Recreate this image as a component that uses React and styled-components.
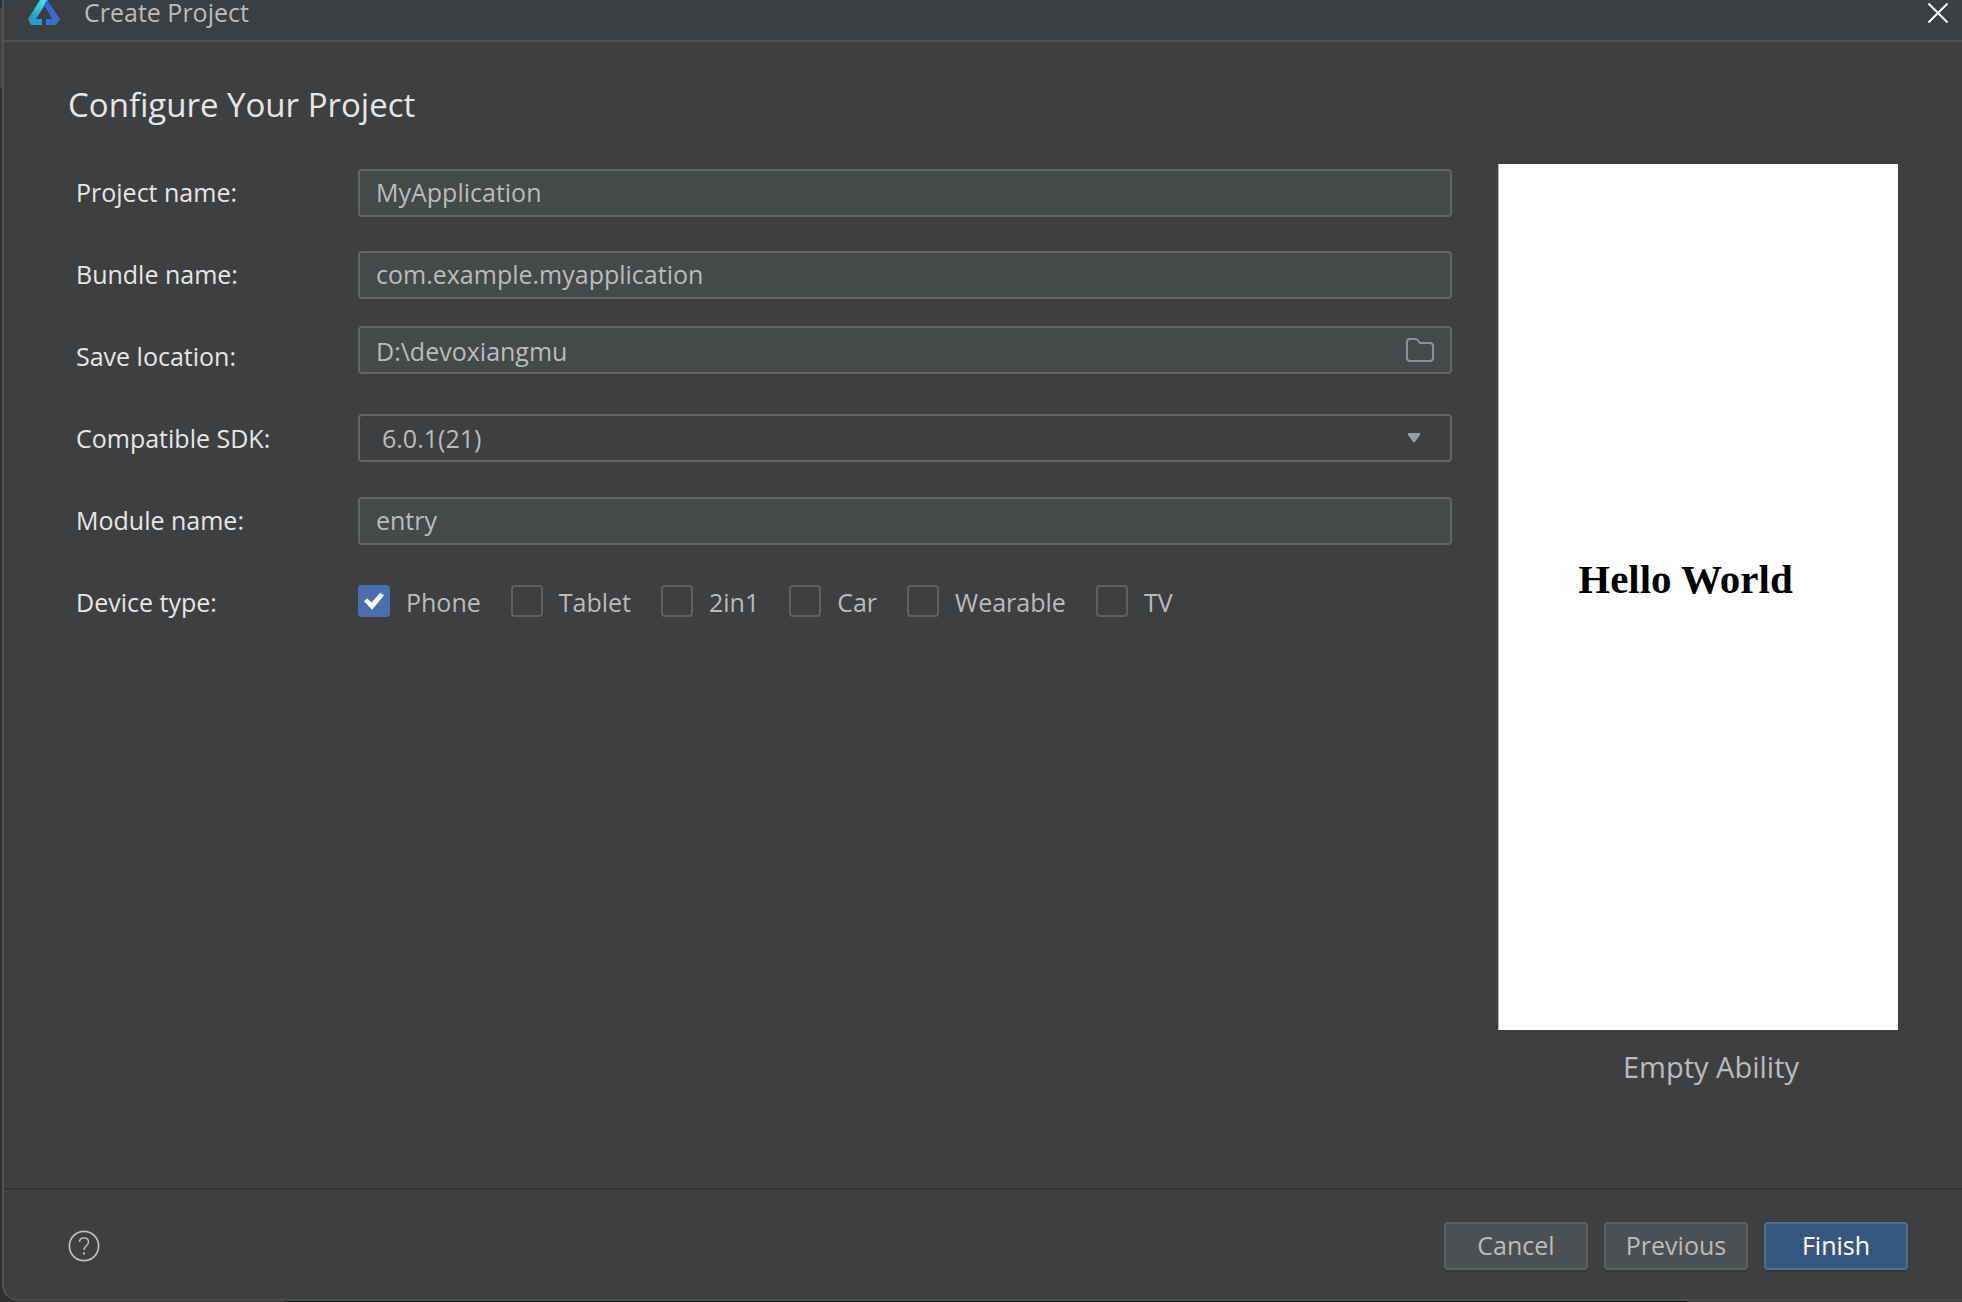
import React from 'react';
import styled, { createGlobalStyle } from 'styled-components';

const GlobalStyle = createGlobalStyle`
  * {
    box-sizing: border-box;
  }

  body {
    margin: 0;
    background-color: #2b2d30;
    font-family: 'Open Sans', 'Noto Sans', sans-serif;
    font-size: 25px;
    line-height: 32px;
    color: #bbbbbb;
  }

  input,
  select,
  button {
    font: inherit;
    color: inherit;
  }
`;

// the editor window behind the dialog shows as a thin strip on the left and bottom
const Backdrop = styled.div`
  min-height: 100vh;
  display: flex;
  padding: 0 0 1px 2px;
  background:
    linear-gradient(#4a443d, #4a443d) 0 8px / 2px 80px no-repeat,
    linear-gradient(90deg, #303032 0 284px, #1c1315 284px 86%, #353638 86%);
`;

const Dialog = styled.main`
  flex: 1;
  display: flex;
  flex-direction: column;
  background-color: #3e3f41;
  border: solid #515254;
  border-width: 0 0 2px 2px;
  border-bottom-color: #4a4b4d;
  border-bottom-left-radius: 16px;
`;

const TitleBar = styled.header`
  display: flex;
  align-items: flex-start;
  height: 42px;
  padding: 0 14px 0 24px;
  background-color: #3c3f41;
  border-bottom: 2px solid #515151;
`;

const WindowTitle = styled.span`
  flex: 1;
  margin-left: 24px;
  line-height: 24px;
`;

const CloseButton = styled.button`
  display: flex;
  margin-top: 3px;
  padding: 0;
  background: none;
  border: none;
`;

const Content = styled.div`
  flex: 1;
  display: flex;
  padding: 36px 64px 0;
`;

const FormPane = styled.form`
  flex: 1;
  margin-right: 46px;
`;

const Heading = styled.h1`
  margin: 0;
  height: 74px;
  font-size: 33px;
  font-weight: 400;
  line-height: 54px;
  color: #e6e6e6;
`;

const Row = styled.div`
  display: grid;
  grid-template-columns: 282px 1fr;
  align-items: center;
  height: 82px;
  padding-left: 8px;
`;

const Label = styled.label`
  padding-bottom: 2px;
  color: #e6e6e6;
`;

const Field = styled.div`
  display: flex;
  align-items: center;
  height: 48px;
  margin-bottom: ${({ $raised }) => ($raised ? '14px' : '0')};
  padding: 0 16px;
  background-color: #45494a;
  border: 2px solid #646464;
  border-radius: 4px;
`;

const SelectField = styled(Field)`
  margin-bottom: 2px;
  background-color: #3e3f41;
`;

const TextInput = styled.input`
  flex: 1;
  min-width: 0;
  padding: ${({ $raised }) => ($raised ? '2px 0 0' : '0 0 2px')};
  background: none;
  border: none;
  outline: none;
`;

const Select = styled.select`
  flex: 1;
  padding: 0 0 0 6px;
  appearance: none;
  background: none;
  border: none;
  outline: none;
`;

const IconButton = styled.button`
  display: flex;
  padding: 0;
  background: none;
  border: none;
`;

const ArrowIcon = styled.svg`
  margin-right: 13px;
`;

const Devices = styled.div`
  display: flex;
  gap: 30px;
`;

const Device = styled.label`
  display: flex;
  align-items: center;
  gap: 16px;
`;

const DeviceName = styled.span`
  padding-bottom: 2px;
`;

const CheckBox = styled.input`
  appearance: none;
  display: grid;
  place-items: center;
  width: 32px;
  height: 32px;
  margin: 0 0 4px;
  border: 2px solid #5f6062;
  border-radius: 4px;

  &:checked {
    background-color: #4b6eaf;
    border-color: #4b6eaf;
  }

  &:checked::before {
    content: '';
    width: 20px;
    height: 18px;
    background-color: #ffffff;
    clip-path: polygon(0 52%, 16% 36%, 38% 58%, 82% 4%, 100% 18%, 40% 98%);
  }
`;

const Preview = styled.aside`
  width: 400px;
  margin-top: 86px;
`;

const Screen = styled.div`
  display: flex;
  align-items: center;
  justify-content: center;
  height: 866px;
  padding: 0 26px 36px 0;
  background-color: #ffffff;
  border-left: 1px solid #b4b4b5;
  font-family: 'Liberation Serif', serif;
  font-size: 41px;
  font-weight: 700;
  line-height: 48px;
  color: #000000;
`;

const TemplateName = styled.p`
  margin: 17px 0 0;
  padding-left: 26px;
  font-size: 29px;
  line-height: 40px;
  text-align: center;
`;

const Footer = styled.footer`
  display: flex;
  align-items: center;
  gap: 16px;
  height: 111px;
  padding: 2px 54px 0 64px;
  border-top: 2px solid #323334;
`;

const HelpButton = styled(IconButton)`
  margin-right: auto;
`;

const Button = styled.button`
  width: 144px;
  height: 48px;
  padding: 0 0 2px;
  background-color: ${({ $primary }) => ($primary ? '#365880' : '#4c5052')};
  border: 2px solid ${({ $primary }) => ($primary ? '#4c708c' : '#5e6060')};
  border-radius: 4px;
  color: ${({ $primary }) => ($primary ? '#ffffff' : '#bbbbbb')};
  box-shadow: 0 2px 0 #38393b;
`;

function Logo() {
  return (
    <svg width="32" height="26" viewBox="0 0 32 26" aria-hidden="true">
      <defs>
        <linearGradient id="left" x1="0.8" y1="0" x2="0.2" y2="1">
          <stop offset="0" stopColor="#43e0ec" />
          <stop offset="1" stopColor="#1d93b8" />
        </linearGradient>
        <linearGradient id="right" x1="0" y1="0" x2="1" y2="1">
          <stop offset="0" stopColor="#1d6fc9" />
          <stop offset="1" stopColor="#4a68d8" />
        </linearGradient>
      </defs>
      <path d="M12 0H20L6 22L0 19Z" fill="url(#left)" />
      <path d="M0 19H14V25H3Z" fill="#1f9fd0" />
      <path d="M19 0L32 19L28 25L16 5Z" fill="url(#right)" />
      <path d="M18 19H25L28 25H18Z" fill="#2b78d4" />
    </svg>
  );
}

const devices = ['Phone', 'Tablet', '2in1', 'Car', 'Wearable', 'TV'];

function TextRow({ id, label, value, raised, children }) {
  return (
    <Row>
      <Label htmlFor={id}>{label}</Label>
      <Field $raised={raised}>
        <TextInput id={id} type="text" defaultValue={value} spellCheck={false} $raised={raised} />
        {children}
      </Field>
    </Row>
  );
}

function App() {
  return (
    <>
      <GlobalStyle />
      <Backdrop>
        <Dialog>
          <TitleBar>
            <Logo />
            <WindowTitle>Create Project</WindowTitle>
            <CloseButton type="button" aria-label="Close">
              <svg width="20" height="20" viewBox="0 0 20 20" stroke="#ffffff" strokeWidth="2">
                <path d="M0.5 0.5L19.5 19.5M19.5 0.5L0.5 19.5" />
              </svg>
            </CloseButton>
          </TitleBar>

          <Content>
            <FormPane>
              <Heading>Configure Your Project</Heading>
              <TextRow id="project" label="Project name:" value="MyApplication" />
              <TextRow id="bundle" label="Bundle name:" value="com.example.myapplication" />
              <TextRow id="location" label="Save location:" value="D:\devoxiangmu" raised>
                <IconButton type="button" aria-label="Browse">
                  <svg width="28" height="24" viewBox="0 0 28 24" fill="none" stroke="#8d9096" strokeWidth="2">
                    <path d="M1 4Q1 1 4 1H9Q11 1 12 2.5L14 5H24Q27 5 27 8V20Q27 23 24 23H4Q1 23 1 20Z" />
                  </svg>
                </IconButton>
              </TextRow>
              <Row>
                <Label htmlFor="sdk">Compatible SDK:</Label>
                <SelectField>
                  <Select id="sdk" defaultValue="6.0.1(21)">
                    <option>6.0.1(21)</option>
                  </Select>
                  <ArrowIcon width="14" height="10" viewBox="0 0 14 10" aria-hidden="true">
                    <path d="M1.5 0H12.5Q14 0.5 13 2L8 8.8Q7 10 6 8.8L1 2Q0 0.5 1.5 0Z" fill="#9a9da2" />
                  </ArrowIcon>
                </SelectField>
              </Row>
              <TextRow id="module" label="Module name:" value="entry" />
              <Row role="group" aria-labelledby="device-type">
                <Label as="span" id="device-type">Device type:</Label>
                <Devices>
                  {devices.map((name) => (
                    <Device key={name}>
                      <CheckBox type="checkbox" defaultChecked={name === 'Phone'} />
                      <DeviceName>{name}</DeviceName>
                    </Device>
                  ))}
                </Devices>
              </Row>
            </FormPane>

            <Preview>
              <Screen>Hello World</Screen>
              <TemplateName>Empty Ability</TemplateName>
            </Preview>
          </Content>

          <Footer>
            <HelpButton type="button" aria-label="Help">
              <svg width="32" height="32" viewBox="0 0 32 32" fill="none" stroke="#bdbec0">
                <circle cx="16" cy="16" r="14.6" strokeWidth="1.7" />
                <path d="M11.5 12C11.5 9 13.5 8 16 8S20.5 9.5 20.5 12C20.5 15.500 16 16 16 20" strokeWidth="1.5" />
                <path d="M15 23.5H17" strokeWidth="2" />
              </svg>
            </HelpButton>
            <Button type="button">Cancel</Button>
            <Button type="button">Previous</Button>
            <Button type="button" $primary>Finish</Button>
          </Footer>
        </Dialog>
      </Backdrop>
    </>
  );
}

export default App;
